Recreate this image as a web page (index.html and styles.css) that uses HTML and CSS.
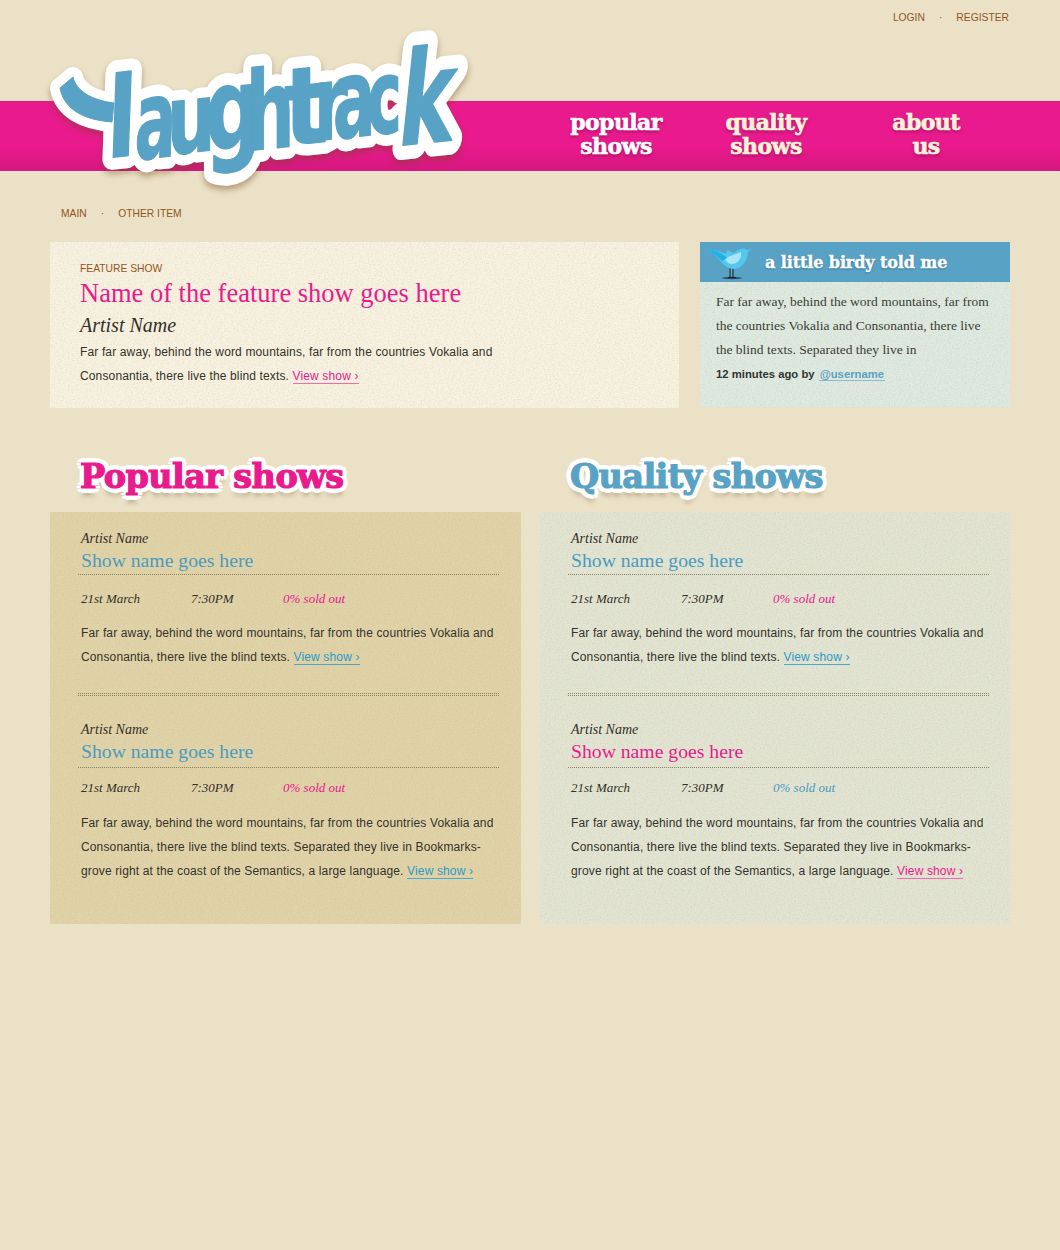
FILE: index.html
```html
<!DOCTYPE html>
<html lang="en">
<head>
    <meta charset="UTF-8">
    <title>Laughtrack</title>
    <link rel="stylesheet" href="styles.css">
</head>
<body>
    <header class="header">
        <div class="top-links">
            <a href="#">LOGIN</a>
            <span class="sep">·</span>
            <a href="#">REGISTER</a>
        </div>
        <div class="band">
            <nav class="main-nav">
                <a class="nav-item nav-popular" href="#">popular<br>shows</a>
                <a class="nav-item nav-quality" href="#">quality<br>shows</a>
                <a class="nav-item nav-about" href="#">about<br>us</a>
            </nav>
        </div>
        <svg class="logo" width="440" height="180" viewBox="40 20 440 180" role="img" aria-label="laughtrack">
            <defs>
                <g id="logo-word">
                    <path class="logo-swash" d="M60 88 L73 77 C76 90 90 100 114 103 L112 122 C85 120 64 110 60 88 Z"/>
                    <text transform="translate(106 158) rotate(-6) skewX(-8) scale(1.2 1.38)">l</text>
                    <text transform="translate(134 160) rotate(-6) skewX(-8) scale(.85 1.35)">a</text>
                    <text transform="translate(167 155) rotate(-6) skewX(-6) scale(.95 1.2)">u</text>
                    <text transform="translate(205 151) rotate(-6) skewX(-6) scale(1.1 1.4)">g</text>
                    <text transform="translate(246 151) rotate(-6) skewX(-6) scale(.95 1.36)">h</text>
                    <text transform="translate(284 146) rotate(-6) skewX(-6) scale(1.3 1.34)">t</text>
                    <text transform="translate(314 141) rotate(-6) skewX(-6) scale(.95 1.3)">r</text>
                    <text transform="translate(333 139) rotate(-6) skewX(-6) scale(.88 1.36)">a</text>
                    <text transform="translate(367 135) rotate(-6) skewX(-6) scale(.82 1.28)">c</text>
                    <text transform="translate(396 146) rotate(-6) skewX(-12) scale(1.14 1.6)">k</text>
                </g>
            </defs>
            <use class="logo-outline" href="#logo-word"/>
            <use class="logo-fill" href="#logo-word"/>
        </svg>
    </header>

    <div class="sub-nav">
        <a href="#">MAIN</a>
        <span class="sep">·</span>
        <a href="#">OTHER ITEM</a>
    </div>

    <div class="intro-row">
        <section class="feature linen">
            <div class="feature-label">FEATURE SHOW</div>
            <h1 class="feature-title">Name of the feature show goes here</h1>
            <div class="feature-artist">Artist Name</div>
            <p class="copy">Far far away, behind the word mountains, far from the countries Vokalia and<br>Consonantia, there live the blind texts. <a class="link-pink" href="#">View show ›</a></p>
        </section>
        <aside class="tweet linen">
            <div class="tweet-head">
                <svg class="bird" width="44" height="34" viewBox="0 0 44 34">
                    <ellipse cx="24" cy="32" rx="10" ry="1.2" fill="#2f4a5c"/>
                    <path d="M22 22 V31 M25 22 V31 M20 31.5 H24 M23.5 31.5 H28" stroke="#1b1b1b" stroke-width="1" fill="none"/>
                    <path d="M0 3 C8 4 13 6 18 8 C18 6 19 4 20 4 C22 6 24 7 26 7 C29 5 31 3 33 3 C36 2 38 3 39 4 L44 3 L40 6 C40 13 35 22 26 23 C18 23 13 16 10 12 C7 9 3 6 0 3 Z" fill="#55c6ee"/>
                    <path d="M17 13 C22 9 27 9 33 6 C34 12 30 18 24 18 C21 18 18 16 17 13 Z" fill="#a8e6f8"/>
                    <path d="M0 3 C8 4 14 7 19 12 L14 15 C9 10 4 7 0 3 Z" fill="#1cb4e6"/>
                </svg>
                <span class="tweet-title">a little birdy told me</span>
            </div>
            <p class="tweet-text">Far far away, behind the word mountains, far from the countries Vokalia and Consonantia, there live the blind texts. Separated they live in</p>
            <div class="tweet-meta">12 minutes ago by <a href="#">@username</a></div>
        </aside>
    </div>

    <div class="shows-row">
        <section class="col">
            <h2 class="col-title title-pink">Popular shows</h2>
            <div class="panel panel-tan linen">
                <article class="show">
                    <div class="show-artist">Artist Name</div>
                    <h3 class="show-title blue">Show name goes here</h3>
                    <div class="show-meta"><span>21st March</span><span>7:30PM</span><span class="pink">0% sold out</span></div>
                    <p class="copy">Far far away, behind the word mountains, far from the countries Vokalia and<br>Consonantia, there live the blind texts. <a class="link-blue" href="#">View show ›</a></p>
                </article>
                <div class="divider"></div>
                <article class="show">
                    <div class="show-artist">Artist Name</div>
                    <h3 class="show-title blue">Show name goes here</h3>
                    <div class="show-meta"><span>21st March</span><span>7:30PM</span><span class="pink">0% sold out</span></div>
                    <p class="copy">Far far away, behind the word mountains, far from the countries Vokalia and<br>Consonantia, there live the blind texts. Separated they live in Bookmarks-<br>grove right at the coast of the Semantics, a large language. <a class="link-blue" href="#">View show ›</a></p>
                </article>
            </div>
        </section>
        <section class="col">
            <h2 class="col-title title-blue">Quality shows</h2>
            <div class="panel panel-sage linen">
                <article class="show">
                    <div class="show-artist">Artist Name</div>
                    <h3 class="show-title blue">Show name goes here</h3>
                    <div class="show-meta"><span>21st March</span><span>7:30PM</span><span class="pink">0% sold out</span></div>
                    <p class="copy">Far far away, behind the word mountains, far from the countries Vokalia and<br>Consonantia, there live the blind texts. <a class="link-blue" href="#">View show ›</a></p>
                </article>
                <div class="divider"></div>
                <article class="show">
                    <div class="show-artist">Artist Name</div>
                    <h3 class="show-title pink">Show name goes here</h3>
                    <div class="show-meta"><span>21st March</span><span>7:30PM</span><span class="blue">0% sold out</span></div>
                    <p class="copy">Far far away, behind the word mountains, far from the countries Vokalia and<br>Consonantia, there live the blind texts. Separated they live in Bookmarks-<br>grove right at the coast of the Semantics, a large language. <a class="link-pink" href="#">View show ›</a></p>
                </article>
            </div>
        </section>
    </div>
</body>
</html>
```

FILE: styles.css
```css
body {
    margin: 0;
    background-color: #ebe1c6;
    font-family: "Liberation Sans", Arial, sans-serif;
    color: #333028;
    min-height: 1250px;
}
a {
    text-decoration: none;
}
p, h1, h2, h3 {
    margin: 0;
    font-weight: normal;
}
.pink {
    color: #e91a8d;
}
.blue {
    color: #4a9bc0;
}

/* header */
.header {
    position: relative;
}
.top-links {
    height: 101px;
    box-sizing: border-box;
    display: flex;
    justify-content: flex-end;
    gap: 14px;
    padding: 11px 51px 0 0;
    font-size: 10.3px;
    line-height: 13px;
}
.top-links a, .sub-nav a, .feature-label {
    color: #93561a;
}
.sep {
    color: #93561a;
}
.band {
    height: 71px;
    box-sizing: border-box;
    background: linear-gradient(#e91a8d 0, #e91a8d 65%, #d5177f 100%);
    border-bottom: 1px solid #f6e6da;
}
.main-nav {
    display: flex;
    padding-left: 536px;
    padding-top: 9px;
}
.nav-item {
    display: block;
    text-align: center;
    font-family: "DejaVu Serif", serif;
    font-weight: bold;
    font-size: 22px;
    line-height: 24px;
    letter-spacing: -.6px;
    color: #fbf3d8;
    -webkit-text-stroke: .6px currentColor;
    text-shadow: 0 2px 3px rgba(110, 10, 70, .55);
}
.nav-popular {
    width: 160px;
    color: #fff;
}
.nav-quality {
    width: 140px;
}
.nav-about {
    width: 180px;
}
.logo {
    position: absolute;
    left: 40px;
    top: 20px;
    overflow: visible;
}
#logo-word text {
    font-family: "Liberation Sans Narrow", "DejaVu Sans Condensed", sans-serif;
    font-weight: bold;
    font-size: 80px;
}
.logo-outline {
    fill: #fff;
    stroke: #fff;
    stroke-width: 18px;
    stroke-linejoin: round;
    --swash: 20px;
    filter: drop-shadow(0 4px 3px rgba(110, 70, 30, .45));
}
.logo-fill {
    fill: #58a2c5;
    stroke: #58a2c5;
    stroke-width: 1px;
    stroke-linejoin: round;
    --swash: 1px;
}
.logo-swash {
    stroke-width: var(--swash);
}

/* sub nav */
.sub-nav {
    display: flex;
    gap: 14px;
    padding: 35px 0 0 61px;
    height: 35px;
    font-size: 10.3px;
    line-height: 13px;
}

.linen {
    background-image: url("data:image/svg+xml,%3Csvg xmlns='http://www.w3.org/2000/svg' width='300' height='300'%3E%3Cfilter id='n'%3E%3CfeTurbulence type='fractalNoise' baseFrequency='.55 .8' numOctaves='2' seed='4'/%3E%3CfeColorMatrix values='0 0 0 0 .45 0 0 0 0 .36 0 0 0 0 .15 0 0 0 .4 -.16'/%3E%3C/filter%3E%3Crect width='300' height='300' filter='url(%23n)'/%3E%3C/svg%3E");
}

/* feature + tweet */
.intro-row {
    display: flex;
    gap: 21px;
    padding-left: 50px;
}
.feature {
    width: 629px;
    height: 166px;
    box-sizing: border-box;
    padding: 20px 0 0 30px;
    background-color: #f8f2e2;
}
.feature-label {
    font-size: 10.3px;
    line-height: 14px;
}
.feature-title {
    font-family: "Liberation Serif", serif;
    font-size: 26.5px;
    line-height: 35px;
    color: #e91a8d;
}
.feature-artist {
    font-family: "Liberation Serif", serif;
    font-style: italic;
    font-size: 20px;
    line-height: 29px;
    color: #333028;
}
.copy {
    font-size: 12px;
    line-height: 24px;
    letter-spacing: .14px;
    color: #35332c;
}
.link-pink {
    color: #e91a8d;
    border-bottom: 1px solid #ef6cb4;
}
.link-blue {
    color: #2a9ac8;
    border-bottom: 1px solid #4aa9cf;
}
.tweet {
    width: 310px;
    height: 165px;
    background-color: #deeae2;
}
.tweet-head {
    height: 40px;
    background: #58a2c5;
    display: flex;
    align-items: center;
    padding-left: 8px;
    gap: 13px;
}
.bird {
    align-self: flex-start;
    margin-top: 4px;
}
.tweet-title {
    font-family: "DejaVu Serif", serif;
    font-weight: bold;
    font-size: 16px;
    letter-spacing: -.1px;
    color: #fff;
    -webkit-text-stroke: .4px #fff;
    text-shadow: 0 1px 2px rgba(20, 60, 90, .55);
}
.tweet-text {
    font-family: "Liberation Serif", serif;
    font-size: 13.5px;
    line-height: 24px;
    color: #3c3d38;
    padding: 8px 16px 0;
}
.tweet-meta {
    padding: 5px 16px 0;
    font-size: 11.3px;
    line-height: 14px;
    font-weight: bold;
    color: #333;
}
.tweet-meta a {
    color: #58a2c5;
    border-bottom: 1px solid #8cbcd4;
    margin-left: 1px;
    padding: 0 1px;
}

/* show columns */
.shows-row {
    display: flex;
    gap: 19px;
    padding-left: 50px;
}
.col {
    width: 471px;
}
.col-title {
    font-family: "DejaVu Serif", serif;
    font-weight: bold;
    font-size: 33.5px;
    line-height: 44px;
    letter-spacing: -.6px;
    padding: 47px 0 0 30px;
    height: 57px;
    -webkit-text-stroke: 1.2px currentColor;
    text-shadow:
        5px 0 0 #fff, -5px 0 0 #fff, 0 5px 0 #fff, 0 -5px 0 #fff,
        4px 3px 0 #fff, -4px 3px 0 #fff, 4px -3px 0 #fff, -4px -3px 0 #fff,
        3px 4px 0 #fff, -3px 4px 0 #fff, 3px -4px 0 #fff, -3px -4px 0 #fff,
        0 8px 4px rgba(110, 80, 40, .35);
}
.title-pink {
    color: #e91a8d;
}
.title-blue {
    color: #58a2c5;
}
.panel {
    box-sizing: border-box;
    height: 412px;
    padding: 16px 22px 0 28px;
}
.panel-tan {
    background-color: #e1d3a9;
}
.panel-sage {
    background-color: #e2e5d4;
}
.show-artist {
    font-family: "Liberation Serif", serif;
    font-style: italic;
    font-size: 14px;
    line-height: 17px;
    padding: 2px 0 0 3px;
}
.show-title {
    font-family: "Liberation Serif", serif;
    font-size: 19.7px;
    line-height: 27px;
    padding-left: 3px;
    border-bottom: 1px dotted #8a8163;
}
.show + .divider + .show .show-title {
    padding-bottom: 2px;
}
.show-meta {
    display: flex;
    padding: 14px 0 0 3px;
    font-family: "Liberation Serif", serif;
    font-style: italic;
    font-size: 13px;
    line-height: 20px;
}
.show + .divider + .show .show-meta {
    padding-top: 10px;
}
.show-meta span:nth-child(1) {
    width: 110px;
}
.show-meta span:nth-child(2) {
    width: 92px;
}
.show .copy {
    margin-top: 12px;
    padding-left: 3px;
}
.show + .divider + .show .copy {
    margin-top: 13px;
}
.divider {
    height: 1px;
    margin: 24px 0 23px;
    border-top: 1px dotted #8a8163;
    border-bottom: 1px dotted #8a8163;
}
```
